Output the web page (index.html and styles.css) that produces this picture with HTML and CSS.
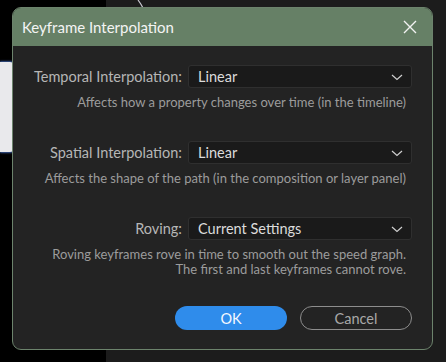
FILE: index.html
```html
<!DOCTYPE html>
<html lang="en">
<head>
    <meta charset="UTF-8">
    <title>Keyframe Interpolation</title>
    <link rel="stylesheet" href="styles.css">
</head>
<body>

<!-- stuff from the app behind the dialog -->
<div class="backdrop">
    <div class="blob"></div>
    <svg class="curve" width="60" height="10" viewBox="0 0 60 10">
        <path d="M31 0 Q34 4 36 8" stroke="#c8c8d0" stroke-width="1.2" fill="none"/>
    </svg>
</div>

<div class="dialog">
    <div class="titlebar">
        <span class="title">Keyframe Interpolation</span>
        <svg class="close" width="14" height="14" viewBox="0 0 14 14">
            <path d="M1 1 L13 13 M13 1 L1 13" stroke="#f2f2f2" stroke-width="1.4" fill="none"/>
        </svg>
    </div>

    <div class="content">
        <div class="section">
            <div class="row">
                <label class="label">Temporal Interpolation:</label>
                <div class="select">
                    <span>Linear</span>
                    <svg class="chevron" width="12" height="8" viewBox="0 0 12 8">
                        <path d="M1 2 L6 6.5 L11 2" stroke="#cfcfcf" stroke-width="1.2" fill="none"/>
                    </svg>
                </div>
            </div>
            <p class="hint">Affects how a property changes over time (in the timeline)</p>
        </div>

        <div class="section">
            <div class="row">
                <label class="label">Spatial Interpolation:</label>
                <div class="select">
                    <span>Linear</span>
                    <svg class="chevron" width="12" height="8" viewBox="0 0 12 8">
                        <path d="M1 2 L6 6.5 L11 2" stroke="#cfcfcf" stroke-width="1.2" fill="none"/>
                    </svg>
                </div>
            </div>
            <p class="hint">Affects the shape of the path (in the composition or layer panel)</p>
        </div>

        <div class="section">
            <div class="row">
                <label class="label">Roving:</label>
                <div class="select">
                    <span>Current Settings</span>
                    <svg class="chevron" width="12" height="8" viewBox="0 0 12 8">
                        <path d="M1 2 L6 6.5 L11 2" stroke="#cfcfcf" stroke-width="1.2" fill="none"/>
                    </svg>
                </div>
            </div>
            <p class="hint">Roving keyframes rove in time to smooth out the speed graph.<br>The first and last keyframes cannot rove.</p>
        </div>

        <div class="buttons">
            <button class="btn btn-ok">OK</button>
            <button class="btn btn-cancel">Cancel</button>
        </div>
    </div>
</div>

</body>
</html>
```

FILE: styles.css
```css
body {
    margin: 0;
    padding: 7px 0 0 12px;
    height: 362px;
    box-sizing: border-box;
    overflow: hidden;
    font-family: Lato, "Open Sans", sans-serif;
    background: linear-gradient(90deg, #000 0, #000 106px, #1c1c1c 106px);
    position: relative;
}

.backdrop .blob {
    position: absolute;
    left: 0;
    top: 62px;
    width: 16px;
    height: 90px;
    background-color: #e9e9ec;
    border-radius: 0 6px 6px 0;
    box-shadow: 0 -1px 2px #3a5a9a, 0 1px 2px #3a5a9a;
}

.backdrop .curve {
    position: absolute;
    left: 107px;
    top: 0;
}

.dialog {
    position: relative;
    width: 421px;
    height: 343px;
    background-color: #232323;
    border: 1px solid #6c836c;
    border-radius: 9px;
    box-sizing: border-box;
    overflow: hidden;
}

.titlebar {
    height: 38px;
    background-color: #668066;
    display: flex;
    align-items: center;
    justify-content: space-between;
    padding: 0 15px 0 9px;
}

.title {
    color: #f4f4f4;
    font-size: 15px;
}

.close {
    display: block;
}

.content {
    padding: 19px 20px 0 0;
}

.section {
    margin-bottom: 31px;
}

.row {
    display: grid;
    grid-template-columns: 169px 224px;
    column-gap: 6px;
    align-items: center;
}

.label {
    text-align: right;
    color: #b6b6b6;
    font-size: 14.5px;
}

.select {
    height: 23px;
    background-color: #1a1a1a;
    border: 1px solid #2f2f2f;
    border-radius: 3px;
    box-sizing: border-box;
    display: flex;
    align-items: center;
    justify-content: space-between;
    padding: 0 8px 0 9px;
    color: #dcdcdc;
    font-size: 14.5px;
}

.hint {
    margin: 7px 6px 0 0;
    text-align: right;
    color: #9c9c9c;
    font-size: 13px;
    line-height: 15px;
}

.buttons {
    display: flex;
    justify-content: flex-end;
    gap: 13px;
    margin-top: -2px;
}

.btn {
    width: 112px;
    height: 24px;
    border-radius: 12px;
    font-family: inherit;
    font-size: 14.5px;
    padding: 0;
    box-sizing: border-box;
}

.btn-ok {
    background-color: #2f8ceb;
    border: none;
    color: #f4f8ff;
}

.btn-cancel {
    background-color: transparent;
    border: 1.5px solid #8d8d8d;
    color: #a8a8a8;
}
```
